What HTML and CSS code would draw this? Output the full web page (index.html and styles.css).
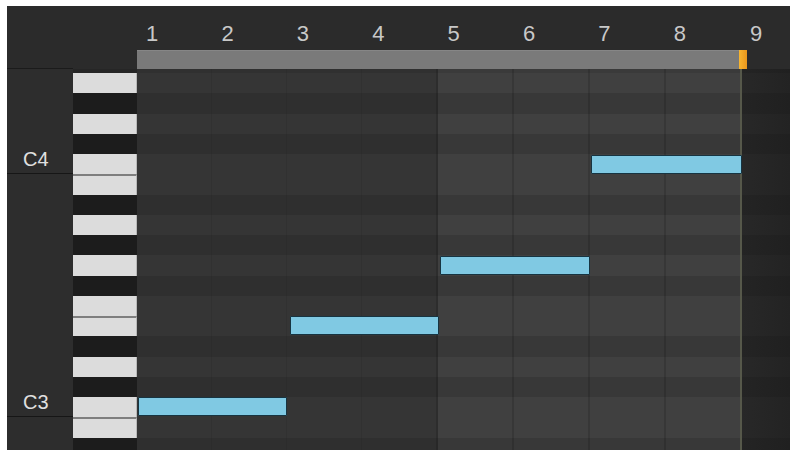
FILE: index.html
```html
<!DOCTYPE html>
<html lang="en">
<head>
  <meta charset="UTF-8">
  <title>Piano Roll</title>
  <link rel="stylesheet" href="styles.css">
</head>
<body>
  <div class="roll">
    <div class="ruler">
      <div class="ruler-corner"></div>
      <div class="ruler-keys"></div>
      <div class="ruler-track">
        <div class="bar-numbers">
          <span class="bar-num">1</span>
          <span class="bar-num">2</span>
          <span class="bar-num">3</span>
          <span class="bar-num">4</span>
          <span class="bar-num">5</span>
          <span class="bar-num">6</span>
          <span class="bar-num">7</span>
          <span class="bar-num">8</span>
          <span class="bar-num last">9</span>
        </div>
        <div class="loop">
          <div class="loop-bar"></div>
          <div class="loop-end"></div>
          <div class="loop-rest"></div>
        </div>
      </div>
    </div>

    <div class="main">
      <div class="pitch gap">
        <div class="label"></div><div class="key"></div><div class="lane"></div><div class="tail"></div>
      </div>
      <!-- E4 -->
      <div class="pitch w">
        <div class="label"></div><div class="key"></div><div class="lane"></div><div class="tail"></div>
      </div>
      <!-- D#4 -->
      <div class="pitch b">
        <div class="label"></div><div class="key"></div><div class="lane"></div><div class="tail"></div>
      </div>
      <!-- D4 -->
      <div class="pitch w">
        <div class="label"></div><div class="key"></div><div class="lane"></div><div class="tail"></div>
      </div>
      <!-- C#4 -->
      <div class="pitch b">
        <div class="label"></div><div class="key"></div><div class="lane"></div><div class="tail"></div>
      </div>
      <!-- C4 -->
      <div class="pitch w">
        <div class="label octave">C4</div><div class="key"></div><div class="lane"></div><div class="tail"></div>
      </div>
      <!-- B3 -->
      <div class="pitch w">
        <div class="label"></div><div class="key split"></div><div class="lane"></div><div class="tail"></div>
      </div>
      <!-- A#3 -->
      <div class="pitch b">
        <div class="label"></div><div class="key"></div><div class="lane"></div><div class="tail"></div>
      </div>
      <!-- A3 -->
      <div class="pitch w">
        <div class="label"></div><div class="key"></div><div class="lane"></div><div class="tail"></div>
      </div>
      <!-- G#3 -->
      <div class="pitch b">
        <div class="label"></div><div class="key"></div><div class="lane"></div><div class="tail"></div>
      </div>
      <!-- G3 -->
      <div class="pitch w">
        <div class="label"></div><div class="key"></div><div class="lane"></div><div class="tail"></div>
      </div>
      <!-- F#3 -->
      <div class="pitch b">
        <div class="label"></div><div class="key"></div><div class="lane"></div><div class="tail"></div>
      </div>
      <!-- F3 -->
      <div class="pitch w">
        <div class="label"></div><div class="key"></div><div class="lane"></div><div class="tail"></div>
      </div>
      <!-- E3 -->
      <div class="pitch w">
        <div class="label"></div><div class="key split"></div><div class="lane"></div><div class="tail"></div>
      </div>
      <!-- D#3 -->
      <div class="pitch b">
        <div class="label"></div><div class="key"></div><div class="lane"></div><div class="tail"></div>
      </div>
      <!-- D3 -->
      <div class="pitch w">
        <div class="label"></div><div class="key"></div><div class="lane"></div><div class="tail"></div>
      </div>
      <!-- C#3 -->
      <div class="pitch b">
        <div class="label"></div><div class="key"></div><div class="lane"></div><div class="tail"></div>
      </div>
      <!-- C3 -->
      <div class="pitch w">
        <div class="label octave">C3</div><div class="key"></div><div class="lane"></div><div class="tail"></div>
      </div>
      <!-- B2 -->
      <div class="pitch w">
        <div class="label"></div><div class="key split"></div><div class="lane"></div><div class="tail"></div>
      </div>
      <!-- A#2 -->
      <div class="pitch b">
        <div class="label"></div><div class="key"></div><div class="lane"></div><div class="tail"></div>
      </div>

      <div class="beats">
        <div class="beat"></div>
        <div class="beat"></div>
        <div class="beat"></div>
        <div class="beat"></div>
        <div class="beat half"></div>
        <div class="beat on"></div>
        <div class="beat on"></div>
        <div class="beat on"></div>
      </div>

      <div class="notes">
        <!-- left = beat * 75.375, top = 4 + row * 20.25 -->
        <div class="note" style="left: 1px; top: 328px; width: 149px;"></div>
        <div class="note" style="left: 153px; top: 247px; width: 149px;"></div>
        <div class="note" style="left: 303px; top: 187px; width: 150px;"></div>
        <div class="note" style="left: 454px; top: 86px; width: 151px;"></div>
      </div>
    </div>
  </div>
</body>
</html>
```

FILE: styles.css
```css
html, body {
  margin: 0;
  overflow: hidden;
}
body {
  background: #fff;
  padding: 6px 0 0 7px;
  font-family: "Liberation Sans", Arial, sans-serif;
}
.roll {
  width: 783px;
  height: 444px;
  background: #2b2b2b;
  overflow: hidden;
}

/* ruler */
.ruler {
  display: flex;
  height: 63px;
}
.ruler-corner {
  flex: none;
  width: 66px;
  border-bottom: 1px solid #1b1b1b;
  box-sizing: border-box;
}
.ruler-keys {
  flex: none;
  width: 64px;
}
.ruler-track {
  flex: 1;
  min-width: 0;
  display: flex;
  flex-direction: column;
}
.bar-numbers {
  display: flex;
  height: 44px;
}
.bar-num {
  width: 75.375px;
  flex: none;
  box-sizing: border-box;
  padding: 17px 0 0 9px;
  font-size: 22px;
  line-height: 1;
  color: #c8c8c8;
}
.bar-num.last {
  flex: 1;
  padding-left: 10px;
}
.loop {
  display: flex;
  height: 19px;
}
.loop-bar {
  flex: none;
  width: 602px;
  background: #7a7a7a;
  border-top: 1px solid #868686;
  box-sizing: border-box;
}
.loop-end {
  flex: none;
  width: 8px;
  background: linear-gradient(to right, #f7b531, #e9961c);
}
.loop-rest {
  flex: 1;
}

/* pitch rows */
.main {
  position: relative;
}
.pitch {
  display: flex;
  height: 20.25px;
}
.pitch.gap {
  height: 4px;
}
.label {
  flex: none;
  width: 66px;
  background: #2d2d2d;
  box-sizing: border-box;
}
.label.octave {
  display: flex;
  align-items: flex-end;
  padding: 0 0 4px 16px;
  border-bottom: 1px solid #161616;
  font-size: 20px;
  line-height: 1;
  color: #e0e0e0;
}
.key {
  flex: none;
  width: 64px;
  box-sizing: border-box;
  background: #1c1c1c;
}
.w .key {
  background: #dcdcdc;
  border-right: 1px solid #b8b8b8;
}
.key.split {
  border-top: 2px solid #7e7e7e;
}
.gap .key {
  background: #262626;
}
.lane {
  flex: none;
  width: 603px;
  background: linear-gradient(to right, #2f2f2f 301.5px, #383838 301.5px);
}
.w .lane {
  background: linear-gradient(to right, #353535 301.5px, #404040 301.5px);
}
.gap .lane {
  background: linear-gradient(to right, #303030 301.5px, #3a3a3a 301.5px);
}
.tail {
  flex: 1;
  background: linear-gradient(to right, #242424, #202020);
  border-left: 2px solid #56584a;
}
.w .tail {
  background: linear-gradient(to right, #282828, #232323);
}

/* beat lines over the lanes */
.beats {
  position: absolute;
  top: 0;
  bottom: 0;
  left: 130px;
  width: 603px;
  display: flex;
  pointer-events: none;
}
.beat {
  flex: 1;
  box-sizing: border-box;
}
.beat + .beat {
  border-left: 1px solid rgba(0, 0, 0, 0.06);
}
.beat.half {
  border-left: 2px solid rgba(0, 0, 0, 0.14);
}
.beat.on {
  border-left: 2px solid rgba(0, 0, 0, 0.13);
}

/* notes */
.notes {
  position: absolute;
  top: 0;
  left: 130px;
  width: 603px;
  height: 100%;
}
.note {
  position: absolute;
  height: 19px;
  box-sizing: border-box;
  background: #80c9e3;
  border: 1px solid #173441;
  border-radius: 1px;
}
```
